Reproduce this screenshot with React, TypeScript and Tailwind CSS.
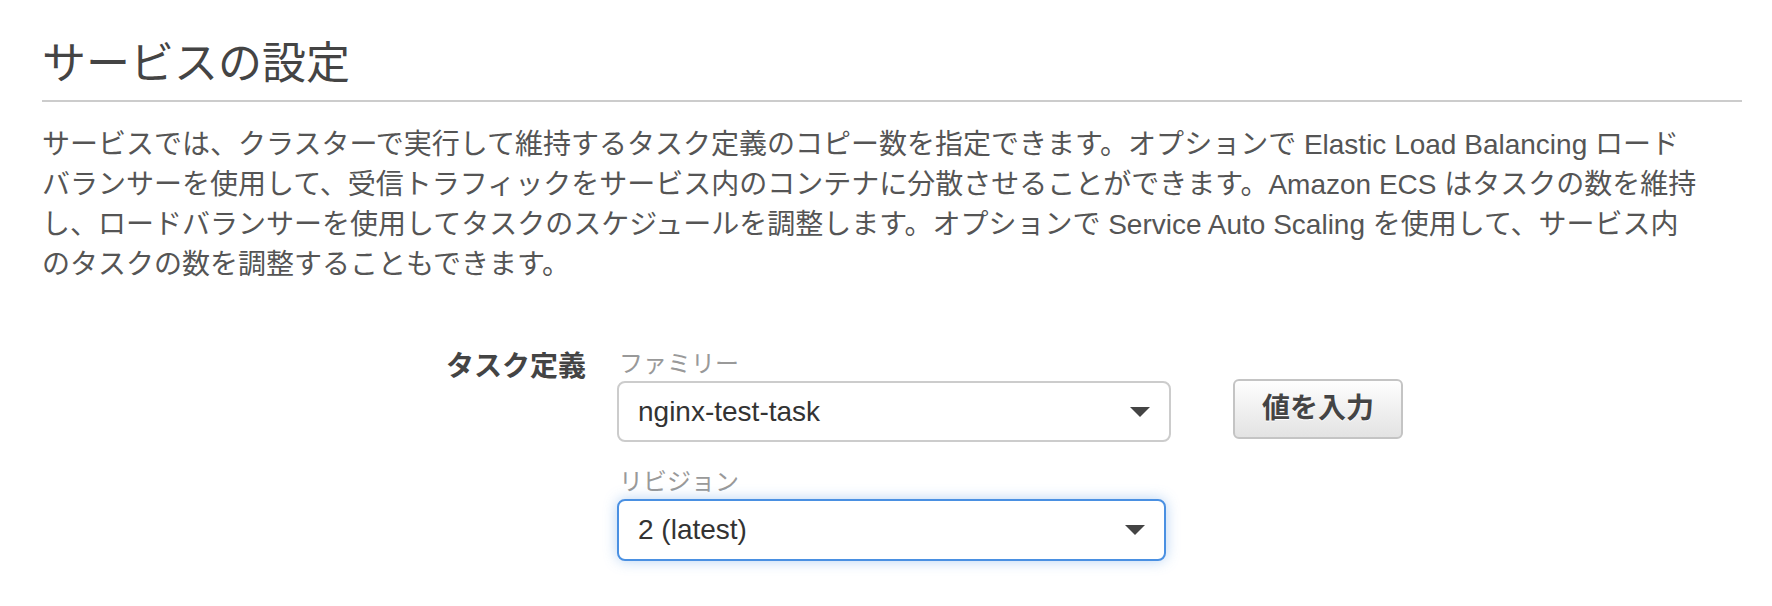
import React from "react";

// small down-pointing triangle used by the select boxes
function Caret() {
  return (
    <svg width="20" height="10" viewBox="0 0 20 10" className="shrink-0">
      <polygon points="0,0 20,0 10,10" fill="#444444" />
    </svg>
  );
}

function SelectBox({
  value,
  focused,
  width,
}: {
  value: string;
  focused?: boolean;
  width: string;
}) {
  return (
    <div
      className={
        focused
          ? `${width} h-[62px] flex items-center justify-between pl-[19px] pr-[19px] bg-white border-2 border-[#4a90e2] rounded-[8px] shadow-[0_0_14px_rgba(74,144,226,0.4)]`
          : `${width} h-[61px] flex items-center justify-between pl-[19px] pr-[19px] bg-white border-2 border-[#cccccc] rounded-[8px]`
      }
    >
      <span className="text-[28px] leading-[34px] text-[#333]">{value}</span>
      <Caret />
    </div>
  );
}

export default function App() {
  return (
    <div className="min-h-screen bg-white pl-[42px] pr-[30px] pt-[36px] font-['Liberation_Sans','Noto_Sans_CJK_JP',sans-serif]">
      <h2 className="text-[44px] leading-[56px] font-normal text-[#444] pb-[8px] border-b-2 border-[#cccccc]">
        サービスの設定
      </h2>

      <p className="mt-[23px] max-w-[1700px] text-[28px] leading-[40px] text-[#555]">
        サービスでは、クラスターで実行して維持するタスク定義のコピー数を指定できます。オプションで
        Elastic Load Balancing ロード
        <br />
        バランサーを使用して、受信トラフィックをサービス内のコンテナに分散させることができます。Amazon
        ECS はタスクの数を維持
        <br />
        し、ロードバランサーを使用してタスクのスケジュールを調整します。オプションで
        Service Auto Scaling を使用して、サービス内
        <br />
        のタスクの数を調整することもできます。
      </p>

      <div className="mt-[62px] flex">
        <div className="w-[544px] pt-[3px] text-right text-[28px] leading-[34px] font-bold text-[#444]">
          タスク定義
        </div>

        <div className="ml-[31px] w-[554px] flex flex-col">
          <label className="pl-[2px] text-[24px] leading-[34px] text-[#999]">
            ファミリー
          </label>
          <SelectBox value="nginx-test-task" width="w-[554px]" />

          <label className="mt-[23px] pl-[2px] text-[24px] leading-[34px] text-[#999]">
            リビジョン
          </label>
          <SelectBox value="2 (latest)" width="w-[549px]" focused />
        </div>

        <div className="ml-[62px] pt-[32px]">
          <button className="w-[170px] h-[60px] flex items-center justify-center rounded-[6px] border-2 border-[#c4c4c4] bg-linear-to-b from-[#fefefe] to-[#e3e3e3] text-[28px] font-bold text-[#444] [text-shadow:0_1px_0_#ffffff]">
            値を入力
          </button>
        </div>
      </div>
    </div>
  );
}
